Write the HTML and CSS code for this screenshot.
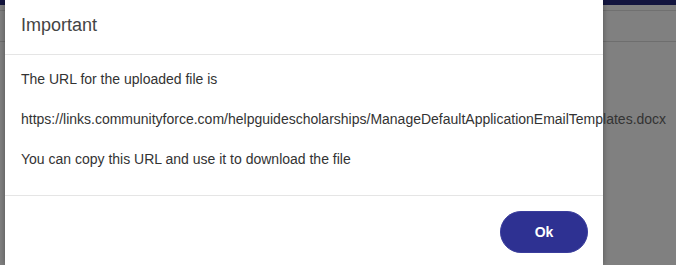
FILE: index.html
```html
<!DOCTYPE html>
<html>
<head>
<meta charset="utf-8">
<link rel="stylesheet" href="styles.css">
</head>
<body>
<div class="page">
  <div class="topbar"></div>
  <div class="subbar"></div>
  <div class="toolbar"></div>
</div>
<div class="dialog">
  <div class="dialog-header">
    <h2 class="dialog-title">Important</h2>
  </div>
  <div class="dialog-body">
    <p>The URL for the uploaded file is</p>
    <p>https://links.communityforce.com/helpguidescholarships/ManageDefaultApplicationEmailTemplates.docx</p>
    <p>You can copy this URL and use it to download the file</p>
  </div>
  <div class="dialog-footer">
    <button class="btn-ok">Ok</button>
  </div>
</div>
</body>
</html>
```
FILE: styles.css
```css
html, body {
  margin: 0;
  padding: 0;
  height: 100%;
}
body {
  background: #808080;
  font-family: "Liberation Sans", Arial, sans-serif;
  overflow: hidden;
}
.page {
  display: flex;
  flex-direction: column;
}
.topbar {
  height: 5px;
  background: #13153f;
}
.subbar {
  height: 5px;
  border-bottom: 1px solid #707070;
}
.toolbar {
  height: 30px;
  border-bottom: 1px solid #6e6e6e;
}
.dialog {
  position: absolute;
  left: 5px;
  top: 0;
  bottom: 0;
  width: 598px;
  background: #fff;
  box-shadow: 0 0 6px rgba(0, 0, 0, 0.35);
  display: flex;
  flex-direction: column;
  overflow: visible;
}
.dialog-header {
  height: 54px;
  flex: none;
  border-bottom: 1px solid #e5e5e5;
  display: flex;
  align-items: center;
  padding: 0 16px;
}
.dialog-title {
  margin: 0;
  font-size: 18px;
  font-weight: normal;
  color: #444;
  position: relative;
  top: -2px;
}
.dialog-body {
  padding: 14px 16px 6px;
  font-size: 14px;
  line-height: 20px;
  color: #333;
}
.dialog-body p {
  margin: 0 0 20px;
  white-space: nowrap;
}
.dialog-footer {
  border-top: 1px solid #e5e5e5;
  padding: 15px 15px 0;
  display: flex;
  justify-content: flex-end;
}
.btn-ok {
  width: 88px;
  height: 42px;
  border: 1px solid #3a3d9c;
  border-radius: 21px;
  background: #2e3192;
  color: #fff;
  font-family: "Liberation Sans", Arial, sans-serif;
  font-size: 14px;
  font-weight: bold;
  padding: 0;
}
```
